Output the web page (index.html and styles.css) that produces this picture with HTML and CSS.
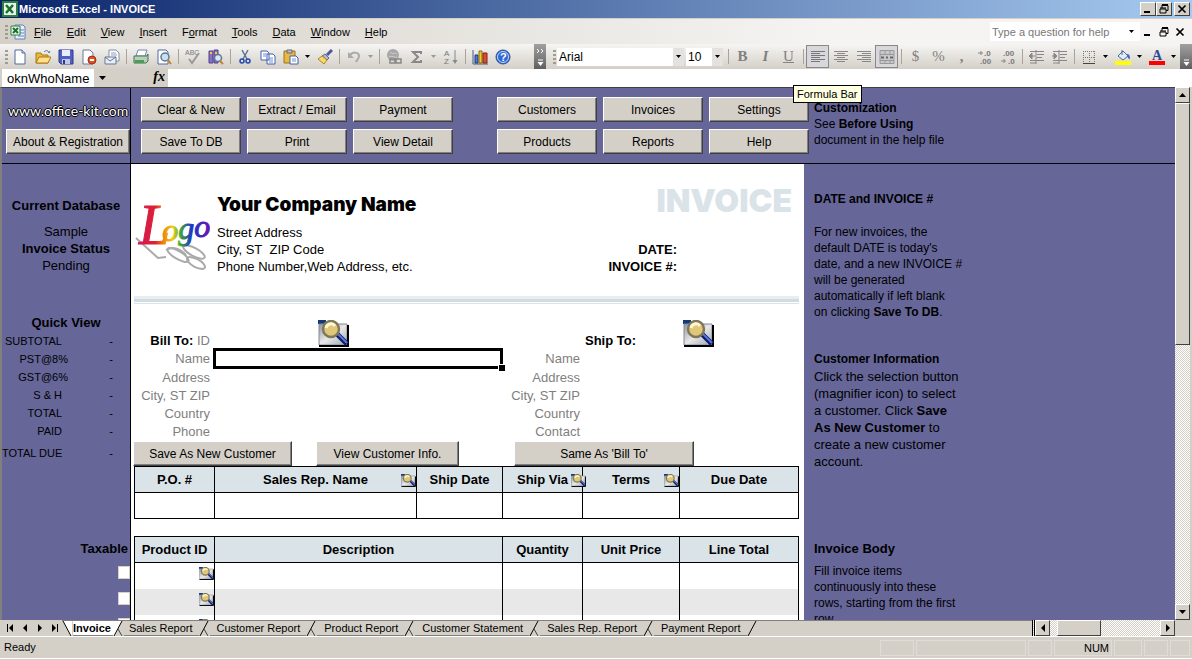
FILE: index.html
```html
<!DOCTYPE html>
<html lang="en">
  <head>
    <meta charset="utf-8" />
    <meta name="viewport" content="width=device-width, initial-scale=1.0" />
    <title>Microsoft Excel - INVOICE</title>
    <link rel="stylesheet" href="styles.css" />
  </head>

  <body>
    <!-- shared icons -->
    <svg class="defs" aria-hidden="true">
      <defs>
        <linearGradient id="lens-page" x1="0" y1="0" x2="1" y2="1">
          <stop offset="0" stop-color="#8f97a0" />
          <stop offset="0.5" stop-color="#e8e8e8" />
          <stop offset="1" stop-color="#9aa4b8" />
        </linearGradient>
        <linearGradient id="rainbow" gradientUnits="userSpaceOnUse" x1="4" y1="0" x2="74" y2="0">
          <stop offset="0" stop-color="#d01858" />
          <stop offset="0.25" stop-color="#e02030" />
          <stop offset="0.36" stop-color="#f08010" />
          <stop offset="0.5" stop-color="#f0d010" />
          <stop offset="0.6" stop-color="#48a830" />
          <stop offset="0.76" stop-color="#1838c8" />
          <stop offset="1" stop-color="#6018b0" />
        </linearGradient>
      </defs>
      <symbol id="lens" viewBox="0 0 31 27">
        <path d="M0 0h8v4H0z" fill="#123a78" />
        <path d="M1 4h28v21H1z" fill="url(#lens-page)" stroke="#889" />
        <path d="M1 26h29V5" fill="none" stroke="#000" stroke-width="2" />
        <path d="M19 14l10 10" stroke="#0c1c68" stroke-width="5" />
        <path d="M20 14l9 9" stroke="#5878d8" stroke-width="2" />
        <circle cx="13" cy="9" r="8" fill="#e0c878" stroke="#807858" stroke-width="2.5" />
        <path d="M8 8a5 5 0 0 1 9-2" fill="none" stroke="#fff8d8" stroke-width="3" />
      </symbol>
      <symbol id="down" viewBox="0 0 7 4"><path d="M0 0h7L3.5 4z" /></symbol>
      <symbol id="slash" viewBox="0 0 11 16">
        <path d="M1 15L9 0" fill="none" stroke="#000" />
        <path d="M5 8l4 7" fill="none" stroke="#444" />
      </symbol>
      <symbol id="min" viewBox="0 0 12 10"><path d="M2 7h6v2H2z" /></symbol>
      <symbol id="restore" viewBox="0 0 12 10">
        <path d="M4 1.5h6v5H8M4 0.5h6M4 1v3M2 4h6M2 5h6v4H2z" fill="none" stroke="#000" />
      </symbol>
      <symbol id="close" viewBox="0 0 12 10">
        <path d="M2.500 1.500l7 7M9.500 1.500l-7 7" stroke="#000" stroke-width="1.700" />
      </symbol>
    </svg>

    <header class="titlebar">
      <svg class="app-icon" viewBox="0 0 16 16">
        <path d="M1 1h14v14H1z" fill="#e8f4e8" stroke="#2c8040" stroke-width="2" />
        <path d="M4 4l7 8M11 4l-7 8" stroke="#187030" stroke-width="2.5" />
      </svg>
      <h1>Microsoft Excel - INVOICE</h1>
      <div class="window-buttons">
        <button aria-label="Minimize"><svg><use href="#min" /></svg></button>
        <button aria-label="Restore"><svg><use href="#restore" /></svg></button>
        <button aria-label="Close"><svg><use href="#close" /></svg></button>
      </div>
    </header>

    <nav class="menubar">
      <span class="grip"></span>
      <svg class="book-icon" viewBox="0 0 16 16">
        <path d="M5 1h8l2 2v12H5z" fill="#e8f0ff" stroke="#6080b8" />
        <path d="M10 6h4M10 9h4M8 12h6" stroke="#6080b8" />
        <path d="M1 2h9v9H1z" fill="#e8f4e8" stroke="#2c8040" />
        <path d="M3 4l5 5M8 4L3 9" stroke="#187030" stroke-width="2" />
      </svg>
      <a href="#"><u>F</u>ile</a>
      <a href="#"><u>E</u>dit</a>
      <a href="#"><u>V</u>iew</a>
      <a href="#"><u>I</u>nsert</a>
      <a href="#">F<u>o</u>rmat</a>
      <a href="#"><u>T</u>ools</a>
      <a href="#"><u>D</u>ata</a>
      <a href="#"><u>W</u>indow</a>
      <a href="#"><u>H</u>elp</a>
      <input class="ask" aria-label="Ask a question" placeholder="Type a question for help" />
      <button class="drop" aria-label="Previous questions"><svg><use href="#down" /></svg></button>
      <div class="mdi-buttons">
        <button aria-label="Minimize workbook"><svg><use href="#min" /></svg></button>
        <button aria-label="Restore workbook"><svg><use href="#restore" /></svg></button>
        <button aria-label="Close workbook"><svg><use href="#close" /></svg></button>
      </div>
    </nav>

    <div class="toolbars">
      <div class="toolbar standard">
        <span class="grip"></span>
        <button aria-label="New">
          <svg viewBox="0 0 16 16"><path d="M3 1h7l3 3v11H3z" fill="#fff" stroke="#5068a0" /><path d="M10 1v3h3" fill="#c8d8f0" stroke="#5068a0" /></svg>
        </button>
        <button aria-label="Open">
          <svg viewBox="0 0 16 16"><path d="M1 4h5l1 2h6v8H1z" fill="#e8b840" stroke="#a87818" /><path d="M1 14l3-6h12l-3 6z" fill="#ffe088" stroke="#a87818" /><path d="M9 3c2-2 4-2 5 1l1-2" fill="none" stroke="#587098" /></svg>
        </button>
        <button aria-label="Save">
          <svg viewBox="0 0 16 16"><path d="M1 1h14v14H3l-2-2z" fill="#5060c0" stroke="#303890" /><path d="M4 1h8v6H4z" fill="#e8ecff" /><path d="M4 10h8v5H4z" fill="#c0c8e8" /><path d="M5 11h2v4H5z" fill="#303890" /></svg>
        </button>
        <button aria-label="Permission">
          <svg viewBox="0 0 16 16"><path d="M2 1h7l3 3v11H2z" fill="#fff" stroke="#6878a0" /><circle cx="11" cy="11" r="4" fill="#e05028" stroke="#a03010" /><path d="M9 11h4" stroke="#fff" stroke-width="2" /></svg>
        </button>
        <button aria-label="E-mail">
          <svg viewBox="0 0 16 16"><path d="M5 1h7l3 3v8H5z" fill="#fff" stroke="#8090a8" /><path d="M7 4h5M7 6h6" stroke="#90a0c0" /><path d="M1 8h11v7H1z" fill="#e8eef8" stroke="#687890" /><path d="M1 8l5 4 6-4" fill="none" stroke="#687890" /></svg>
        </button>
        <span class="sep"></span>
        <button aria-label="Print">
          <svg viewBox="0 0 16 16"><path d="M5 1h9l-2 6H3z" fill="#fff" stroke="#7088b0" /><path d="M1 7h13l1-2v7l-2 2H1z" fill="#b8d0b8" stroke="#487058" /><path d="M2 11h9v3H2z" fill="#48a058" /></svg>
        </button>
        <button aria-label="Print Preview">
          <svg viewBox="0 0 16 16"><path d="M2 1h8l2 2v12H2z" fill="#fff" stroke="#5068a0" /><circle cx="9" cy="8" r="4" fill="#c8e0f0" stroke="#607890" stroke-width="1.5" /><path d="M12 11l3 4" stroke="#c88030" stroke-width="2" /></svg>
        </button>
        <span class="sep"></span>
        <button aria-label="Spelling">
          <svg viewBox="0 0 16 16"><text x="0" y="6" class="tiny">ABC</text><path d="M4 10l3 4 7-10" fill="none" stroke="#999" stroke-width="2" /></svg>
        </button>
        <button aria-label="Research">
          <svg viewBox="0 0 16 16"><path d="M1 2h4v12H1zM6 1h4v13H6z" fill="#8870c8" stroke="#504090" /><path d="M2 4h2M7 4h2" stroke="#f0d040" stroke-width="2" /><circle cx="10" cy="9" r="3.500" fill="#d8e8f8" stroke="#607890" stroke-width="1.500" /><path d="M12 12l3 3" stroke="#c88030" stroke-width="2" /></svg>
        </button>
        <span class="sep"></span>
        <button aria-label="Cut">
          <svg viewBox="0 0 16 16"><path d="M5 1l5 9M11 1L6 10" stroke="#607098" stroke-width="1.500" /><circle cx="5" cy="12" r="2" fill="none" stroke="#2048b0" stroke-width="1.500" /><circle cx="11" cy="12" r="2" fill="none" stroke="#2048b0" stroke-width="1.500" /></svg>
        </button>
        <button aria-label="Copy">
          <svg viewBox="0 0 16 16"><path d="M1 2h6l2 2v7H1zM7 5h6l2 2v8H7z" fill="#fff" stroke="#4060b0" /><path d="M3 5h4M3 7h3M9 9h4M9 11h4M9 13h4" stroke="#7090d0" /></svg>
        </button>
        <button aria-label="Paste">
          <svg viewBox="0 0 16 16"><path d="M1 2h11v12H1z" fill="#e8b840" stroke="#a07020" /><path d="M4 1h5v3H4z" fill="#c0c0c8" stroke="#606878" /><path d="M7 7h6l2 2v6H7z" fill="#fff" stroke="#4060b0" /><path d="M9 10h4M9 12h4" stroke="#7090d0" /></svg>
        </button>
        <button class="drop" aria-label="Paste options"><svg><use href="#down" /></svg></button>
        <button aria-label="Format Painter">
          <svg viewBox="0 0 16 16"><path d="M15 1l-5 5" stroke="#505898" stroke-width="3" /><path d="M8 5l4 4-2 2-5-4z" fill="#b0b8d8" stroke="#606890" /><path d="M5 7l5 4-3 4-6-5z" fill="#f8d868" stroke="#b08820" /></svg>
        </button>
        <span class="sep"></span>
        <button aria-label="Undo">
          <svg viewBox="0 0 16 16"><path d="M3 7c4-5 10-4 10 0 0 3-2 4-3 6" fill="none" stroke="#aaa" stroke-width="2" /><path d="M2 3v6h6z" fill="#aaa" /></svg>
        </button>
        <button class="drop off" aria-label="Undo list"><svg><use href="#down" /></svg></button>
        <span class="sep"></span>
        <button aria-label="Insert Hyperlink">
          <svg viewBox="0 0 16 16"><circle cx="7" cy="6" r="6" fill="#a8a8a8" /><path d="M4 3c3 3 5 0 7 2M3 8c3-2 5 1 8 0" fill="none" stroke="#ccc" /><path d="M4 10h6v4H4zM9 10h6v4H9z" fill="none" stroke="#888" stroke-width="1.500" /></svg>
        </button>
        <button aria-label="AutoSum">
          <svg viewBox="0 0 16 16"><path d="M12 5V3H4l5 5-5 5h8v-2" fill="none" stroke="#888" stroke-width="2" /></svg>
        </button>
        <button class="drop off" aria-label="AutoSum list"><svg><use href="#down" /></svg></button>
        <button aria-label="Sort Ascending">
          <svg viewBox="0 0 16 16"><text x="1" y="7" class="small">A</text><text x="1" y="15" class="small">Z</text><path d="M12 1v12" stroke="#888" /><path d="M9.500 11h5L12 15z" fill="#888" /></svg>
        </button>
        <span class="sep"></span>
        <button aria-label="Chart Wizard">
          <svg viewBox="0 0 16 16"><path d="M1 1v14h15" fill="none" stroke="#406080" /><path d="M3 6h3v8H3z" fill="#4878d8" stroke="#203880" /><path d="M7 2h3v12H7z" fill="#f0c830" stroke="#906810" /><path d="M11 4h4v10h-4z" fill="#d85030" stroke="#802010" /></svg>
        </button>
        <button aria-label="Excel Help">
          <svg viewBox="0 0 16 16"><circle cx="8" cy="8" r="7" fill="#3068d0" stroke="#3050a0" /><circle cx="8" cy="8" r="5.500" fill="none" stroke="#c0d8ff" /><text x="5" y="12" class="q">?</text></svg>
        </button>
        <button class="overflow" aria-label="Standard toolbar options">
          <svg viewBox="0 0 12 25"><path d="M3 5l2 2-2 2M7 5l2 2-2 2M4 16h5" fill="none" stroke="#fff" /><path d="M3.500 18h6l-3 4z" fill="#fff" /></svg>
        </button>
      </div>

      <div class="toolbar formatting">
        <span class="grip"></span>
        <div class="combo combo-font">
          <input value="Arial" aria-label="Font" />
          <button class="drop" aria-label="Font list"><svg><use href="#down" /></svg></button>
        </div>
        <div class="combo combo-size">
          <input value="10" aria-label="Font size" />
          <button class="drop" aria-label="Size list"><svg><use href="#down" /></svg></button>
        </div>
        <span class="sep"></span>
        <button class="glyph"><b>B</b></button>
        <button class="glyph"><i>I</i></button>
        <button class="glyph"><u>U</u></button>
        <span class="sep"></span>
        <button class="pressed" aria-label="Align Left">
          <svg viewBox="0 0 16 16"><path d="M1 2.500h14M1 4.500h9M1 6.500h14M1 8.500h9M1 10.500h14M1 12.500h9" stroke="#777" /></svg>
        </button>
        <button aria-label="Center">
          <svg viewBox="0 0 16 16"><path d="M1 2.500h14M4 4.500h8M1 6.500h14M4 8.500h8M1 10.500h14M4 12.500h8" stroke="#888" /></svg>
        </button>
        <button aria-label="Align Right">
          <svg viewBox="0 0 16 16"><path d="M1 2.500h14M6 4.500h9M1 6.500h14M6 8.500h9M1 10.500h14M6 12.500h9" stroke="#888" /></svg>
        </button>
        <button class="pressed" aria-label="Merge and Center">
          <svg viewBox="0 0 16 16"><path d="M1 1.500h14v13H1zM1 5.500h14M1 11.500h14M6 1v4M11 1v4M6 12v3M11 12v3" fill="#c8c8c8" stroke="#999" /><path d="M2 8.500h3M11 8.500h3M7 8.500h2" stroke="#666" stroke-width="2" /></svg>
        </button>
        <span class="sep"></span>
        <button class="glyph">$</button>
        <button class="glyph">%</button>
        <button class="glyph"><b>,</b></button>
        <button aria-label="Increase Decimal">
          <svg viewBox="0 0 16 16"><path d="M1 4h5M4 2v4" stroke="#888" /><text x="7" y="7" class="dec">.0</text><text x="3" y="15" class="dec">.00</text></svg>
        </button>
        <button aria-label="Decrease Decimal">
          <svg viewBox="0 0 16 16"><text x="3" y="7" class="dec">.00</text><path d="M1 12h5M4 10v4" stroke="#888" /><text x="8" y="15" class="dec">.0</text></svg>
        </button>
        <span class="sep"></span>
        <button aria-label="Decrease Indent">
          <svg viewBox="0 0 16 16"><path d="M1 2.500h14M8 5.500h7M8 8.500h5M1 11.500h14M1 14h6M7 1v14" stroke="#888" /><path d="M0 7l3-3v6zM3 7h3" fill="#888" stroke="#888" /></svg>
        </button>
        <button aria-label="Increase Indent">
          <svg viewBox="0 0 16 16"><path d="M1 2.500h14M8 5.500h7M8 8.500h5M1 11.500h14M1 14h6M7 1v14" stroke="#888" /><path d="M5 7L2 4v6zM0 7h3" fill="#888" stroke="#888" /></svg>
        </button>
        <span class="sep"></span>
        <button aria-label="Borders">
          <svg viewBox="0 0 16 16"><path d="M2 2.500h12M2 8.500h12M2.500 2v11M8.500 2v11M13.500 2v11" stroke="#777" stroke-dasharray="1 1" /><path d="M2 14.500h12" stroke="#444" /></svg>
        </button>
        <button class="drop" aria-label="Border list"><svg><use href="#down" /></svg></button>
        <button aria-label="Fill Color">
          <svg viewBox="0 0 16 16"><path d="M7 1v5M3 7l5-5 5 5-5 4z" fill="#e0ecf8" stroke="#506890" /><path d="M12 5c3 0 3 3 3 5-2 0-2-2-3-3z" fill="#3868c8" /><path d="M0 12h16v4H0z" fill="#ff0" /></svg>
        </button>
        <button class="drop" aria-label="Fill list"><svg><use href="#down" /></svg></button>
        <button aria-label="Font Color">
          <svg viewBox="0 0 16 16"><text x="3" y="11" class="fontcolor">A</text><path d="M0 12h16v4H0z" fill="#f00" /></svg>
        </button>
        <button class="drop" aria-label="Font color list"><svg><use href="#down" /></svg></button>
        <button class="overflow" aria-label="Formatting toolbar options">
          <svg viewBox="0 0 12 25"><path d="M4 16h5" stroke="#fff" /><path d="M3.500 18h6l-3 4z" fill="#fff" /></svg>
        </button>
      </div>
    </div>

    <div class="formulabar">
      <input class="namebox" value="oknWhoName" aria-label="Name box" />
      <button class="drop" aria-label="Names"><svg><use href="#down" /></svg></button>
      <span class="fx">fx</span>
      <input class="formula" aria-label="Formula" />
      <span class="tooltip" role="tooltip">Formula Bar</span>
    </div>

    <main class="workspace">
      <div class="sheet">
        <div class="actions">
          <div class="about">
            <a href="#">www.office-kit.com</a>
            <button>About &amp; Registration</button>
          </div>
          <div class="button-grid">
            <button>Clear &amp; New</button>
            <button>Extract / Email</button>
            <button>Payment</button>
            <button>Save To DB</button>
            <button>Print</button>
            <button>View Detail</button>
          </div>
          <div class="button-grid">
            <button>Customers</button>
            <button>Invoices</button>
            <button>Settings</button>
            <button>Products</button>
            <button>Reports</button>
            <button>Help</button>
          </div>
          <p class="customization">
            <b>Customization</b><br />See <b>Before Using</b><br />document in the help file
          </p>
        </div>

        <div class="body">
          <aside class="sidebar">
            <h2>Current Database</h2>
            <p>Sample</p>
            <p><b>Invoice Status</b></p>
            <p>Pending</p>
            <h2 class="quick">Quick View</h2>
            <table class="totals">
              <tr><th>SUBTOTAL</th><td>-</td></tr>
              <tr><th class="tax">PST@8%</th><td>-</td></tr>
              <tr><th class="tax">GST@6%</th><td>-</td></tr>
              <tr><th>S &amp; H</th><td>-</td></tr>
              <tr><th>TOTAL</th><td>-</td></tr>
              <tr><th>PAID</th><td>-</td></tr>
              <tr class="due"><th>TOTAL DUE</th><td>-</td></tr>
            </table>
            <h2 class="taxable">Taxable</h2>
            <div class="checks">
              <input type="checkbox" aria-label="Row 1 taxable" />
              <input type="checkbox" aria-label="Row 2 taxable" />
              <input type="checkbox" aria-label="Row 3 taxable" />
            </div>
          </aside>

          <section class="invoice">
            <div class="company">
              <svg class="logo" viewBox="0 0 76 88" aria-label="Logo">
                <g fill="none" stroke="#aaa" stroke-width="2">
                  <path d="M2 54l22 20 8-1" />
                  <path d="M32 66c6-4 14-2 20 5" />
                  <ellipse cx="44" cy="71" rx="12" ry="4" transform="rotate(30 44 71)" />
                  <ellipse cx="62" cy="79" rx="10" ry="4" transform="rotate(28 62 79)" />
                  <ellipse cx="60" cy="68" rx="12" ry="4" transform="rotate(28 60 68)" />
                </g>
                <text x="5" y="60"><tspan class="logo-l">L</tspan><tspan dx="-8" dy="-3">o</tspan><tspan dy="-2">g</tspan><tspan dy="-2">o</tspan></text>
              </svg>
              <div class="address">
                <h2>Your Company Name</h2>
                <p>Street Address</p>
                <p>City, ST&nbsp; ZIP Code</p>
                <p>Phone Number,Web Address, etc.</p>
              </div>
              <div class="heading">
                <h2>INVOICE</h2>
                <p>DATE:</p>
                <p>INVOICE #:</p>
              </div>
            </div>

            <hr />

            <div class="parties">
              <p class="label first"><b>Bill To:</b> ID</p>
              <button class="lens bill-lens" aria-label="Select customer"><svg><use href="#lens" /></svg></button>
              <p class="ship first"><b>Ship To:</b></p>
              <button class="lens" aria-label="Select ship-to"><svg><use href="#lens" /></svg></button>

              <label class="label" for="bill-name">Name</label>
              <div class="active-cell"><input id="bill-name" /></div>
              <p class="label">Name</p>
              <p class="label">Address</p>
              <p class="label ship-label">Address</p>
              <p class="label">City, ST ZIP</p>
              <p class="label ship-label">City, ST ZIP</p>
              <p class="label">Country</p>
              <p class="label ship-label">Country</p>
              <p class="label">Phone</p>
              <p class="label ship-label">Contact</p>
            </div>

            <div class="party-buttons">
              <button class="save-new">Save As New Customer</button>
              <button class="view-info">View Customer Info.</button>
              <button class="same-as">Same As 'Bill To'</button>
            </div>

            <table class="grid">
              <colgroup>
                <col class="c-id" /><col class="c-rep" /><col class="c-date" /><col class="c-qty" /><col class="c-price" /><col />
              </colgroup>
              <tr>
                <th>P.O. #</th>
                <th>Sales Rep. Name<button class="mini" aria-label="Select rep"><svg><use href="#lens" /></svg></button></th>
                <th>Ship Date</th>
                <th>Ship Via<button class="mini over" aria-label="Select carrier"><svg><use href="#lens" /></svg></button></th>
                <th>Terms<button class="mini" aria-label="Select terms"><svg><use href="#lens" /></svg></button></th>
                <th>Due Date</th>
              </tr>
              <tr><td></td><td></td><td></td><td></td><td></td><td></td></tr>
            </table>

            <table class="grid items">
              <colgroup>
                <col class="c-id" /><col class="c-desc" /><col class="c-qty" /><col class="c-price" /><col />
              </colgroup>
              <tr><th>Product ID</th><th>Description</th><th>Quantity</th><th>Unit Price</th><th>Line Total</th></tr>
              <tr>
                <td><button class="mini" aria-label="Select product"><svg><use href="#lens" /></svg></button></td>
                <td></td><td></td><td></td><td></td>
              </tr>
              <tr class="odd">
                <td><button class="mini" aria-label="Select product"><svg><use href="#lens" /></svg></button></td>
                <td></td><td></td><td></td><td></td>
              </tr>
              <tr>
                <td><button class="mini" aria-label="Select product"><svg><use href="#lens" /></svg></button></td>
                <td></td><td></td><td></td><td></td>
              </tr>
            </table>
          </section>

          <aside class="notes">
            <h3>DATE and INVOICE #</h3>
            <p class="date-note">
              For new invoices, the<br />default DATE is today's<br />date, and a new INVOICE #<br />will be
              generated<br />automatically if left blank<br />on clicking <b>Save To DB</b>.
            </p>
            <h3>Customer Information</h3>
            <p class="customer-note">
              Click the selection button<br />(magnifier icon) to select<br />a customer. Click <b>Save</b><br /><b>As
              New Customer</b> to<br />create a new customer<br />account.
            </p>
            <h3 class="large">Invoice Body</h3>
            <p class="body-note">
              Fill invoice items<br />continuously into these<br />rows, starting from the first<br />row.
            </p>
          </aside>
        </div>
      </div>

      <div class="vscroll">
        <button aria-label="Scroll up"><svg viewBox="0 0 7 4"><path d="M0 4h7L3.500 0z" /></svg></button>
        <div class="thumb"></div>
        <div class="track"></div>
        <button aria-label="Scroll down"><svg><use href="#down" /></svg></button>
      </div>
    </main>

    <div class="tabbar">
      <div class="tab-nav">
        <button aria-label="First sheet"><svg viewBox="0 0 8 8"><path d="M1 0h1v8H1zM7 0v8L3 4z" /></svg></button>
        <button aria-label="Previous sheet"><svg viewBox="0 0 8 8"><path d="M6 0v8L2 4z" /></svg></button>
        <button aria-label="Next sheet"><svg viewBox="0 0 8 8"><path d="M2 0v8l4-4z" /></svg></button>
        <button aria-label="Last sheet"><svg viewBox="0 0 8 8"><path d="M1 0v8l4-4zM6 0h1v8H6z" /></svg></button>
      </div>
      <nav class="tabs">
        <svg class="slash" viewBox="0 0 9 16"><path d="M0 0h9v16H8z" fill="#fff" /><path d="M0 0l8 15" stroke="#000" /></svg>
        <a class="current" href="#">Invoice</a>
        <svg class="slash" viewBox="0 0 11 16"><path d="M0 0h9L1 16H0z" fill="#fff" /><use href="#slash" /></svg>
        <a class="second" href="#">Sales Report</a>
        <svg class="slash"><use href="#slash" /></svg>
        <a href="#">Customer Report</a>
        <svg class="slash"><use href="#slash" /></svg>
        <a href="#">Product Report</a>
        <svg class="slash"><use href="#slash" /></svg>
        <a href="#">Customer Statement</a>
        <svg class="slash"><use href="#slash" /></svg>
        <a href="#">Sales Rep. Report</a>
        <svg class="slash"><use href="#slash" /></svg>
        <a href="#">Payment Report</a>
        <svg class="slash" viewBox="0 0 11 16"><path d="M1 15L9 0" stroke="#000" /></svg>
      </nav>
      <div class="hscroll">
        <button aria-label="Scroll left"><svg viewBox="0 0 8 8"><path d="M6 0v8L2 4z" /></svg></button>
        <div class="thumb"></div>
        <button aria-label="Scroll right"><svg viewBox="0 0 8 8"><path d="M2 0v8l4-4z" /></svg></button>
      </div>
    </div>

    <footer class="statusbar">
      <span class="ready">Ready</span>
      <span class="panel w34"></span>
      <span class="panel w110"></span>
      <span class="panel w24"></span>
      <span class="panel num">NUM</span>
      <span class="panel w28"></span>
      <span class="panel w24"></span>
      <span class="panel w20"></span>
    </footer>
  </body>
</html>
```
FILE: styles.css
```css
* {
  box-sizing: border-box;
}

body {
  margin: 0;
  height: 100vh;
  display: flex;
  flex-direction: column;
  overflow: hidden;
  background: #d4d0c8;
  color: #000;
  font-family: "Liberation Sans", Arial, sans-serif;
  font-size: 12px;
}

h1,
h2,
h3,
p {
  margin: 0;
  font-size: inherit;
}

a {
  color: inherit;
  text-decoration: none;
}

button,
input {
  font: inherit;
  color: inherit;
  margin: 0;
  padding: 0;
  border: 0;
  border-radius: 0;
  outline: 0;
}

button {
  display: flex;
  align-items: center;
  justify-content: center;
  background: none;
}

svg {
  display: block;
}

.defs {
  position: absolute;
  width: 0;
  height: 0;
}

/* title bar */
.titlebar {
  display: flex;
  align-items: center;
  height: 19px;
  padding: 0 2px;
  background: linear-gradient(to right, #0a246a, #a6caf0);
  border-bottom: 1px solid #d4d0c8;
  color: #fff;
}

.app-icon,
.book-icon {
  width: 16px;
  height: 16px;
}

.titlebar h1 {
  flex: 1;
  padding-left: 1px;
  font-size: 11px;
}

.window-buttons {
  display: flex;
}

.window-buttons button {
  width: 16px;
  height: 14px;
  background: #d4d0c8;
  border: 1px solid;
  border-color: #fff #404040 #404040 #fff;
}

.window-buttons button:last-child {
  margin-left: 2px;
}

.window-buttons svg,
.mdi-buttons svg {
  width: 12px;
  height: 10px;
}

/* menus */
.menubar {
  display: flex;
  align-items: center;
  height: 25px;
  padding: 0 4px 0 5px;
  background: linear-gradient(to right, #d4d0c8, #f5f4f2 70%);
  font-size: 11px;
}

.menubar a {
  margin-right: 15px;
}

.book-icon {
  margin: 0 8px 0 2px;
}

.grip {
  width: 3px;
  height: 14px;
  background: repeating-linear-gradient(#a09c94 0 2px, transparent 2px 4px);
}

.ask {
  width: 133px;
  height: 19px;
  margin-left: auto;
  padding-left: 2px;
  background: #fff;
}

.ask::placeholder {
  color: #777;
  opacity: 1;
}

.drop {
  width: 11px;
}

.drop svg {
  width: 5px;
  height: 3px;
}

.drop.off svg {
  fill: #999;
}

.menubar .drop {
  width: 17px;
  height: 19px;
  background: #fff;
}

.mdi-buttons {
  display: flex;
}

.mdi-buttons button {
  width: 16px;
}

/* toolbars */
.toolbars {
  display: flex;
  height: 25px;
  background: linear-gradient(#f6f5f3, #d4d0c8);
}

.toolbar {
  display: flex;
  align-items: stretch;
  padding-left: 5px;
}

.toolbar .grip {
  align-self: center;
}

.standard {
  width: 546px;
}

.formatting {
  flex: 1;
}

.toolbar button {
  width: 23px;
}

.toolbar button svg {
  width: 16px;
  height: 16px;
}

.toolbar .drop {
  width: 11px;
}

.toolbar .drop svg {
  width: 5px;
  height: 3px;
}

.sep {
  width: 1px;
  margin: 5px 2px 5px 3px;
  background: #a8a49c;
}

.toolbar .overflow {
  width: 12px;
  margin-left: auto;
  background: linear-gradient(#a0a0a0, #606060);
}

.toolbar .overflow svg {
  width: 12px;
  height: 25px;
}

.formatting .grip {
  margin: 0 1px 0 2px;
}

.combo {
  display: flex;
  align-self: center;
  height: 18px;
  margin-right: 2px;
  background: #fff;
}

.combo input {
  width: 100%;
  min-width: 0;
  padding-left: 2px;
  background: none;
}

.combo .drop {
  flex: none;
  background: #e4e2de;
}

.combo-font {
  width: 127px;
}

.combo-size {
  width: 37px;
}

.toolbar .pressed {
  height: 23px;
  align-self: center;
  border: 1px solid #888;
  background: #d8d8dc;
}

.glyph {
  color: #808080;
  font-family: "Liberation Serif", serif;
  font-size: 15px;
}

.glyph i {
  font-weight: bold;
}

.tiny {
  font-size: 7px;
  fill: #777;
}

.small {
  font-size: 8px;
  fill: #777;
}

.dec {
  font-size: 8px;
  font-weight: bold;
  fill: #777;
}

.q {
  font-size: 11px;
  font-weight: bold;
  fill: #fff;
}

.fontcolor {
  font-family: "Liberation Serif", serif;
  font-size: 14px;
  font-weight: bold;
  fill: #304890;
}

/* formula bar */
.formulabar {
  position: relative;
  display: flex;
  height: 18px;
  padding-left: 2px;
}

.namebox {
  width: 92px;
  padding-left: 5px;
  background: #fff;
  font-size: 13px;
}

.formulabar .drop {
  width: 16px;
}

.formulabar .drop svg {
  width: 7px;
  height: 4px;
}

.fx {
  width: 58px;
  padding-right: 3px;
  text-align: right;
  font: italic bold 14px/16px "Liberation Serif", serif;
}

.formula {
  flex: 1;
  background: #fff;
}

.tooltip {
  position: absolute;
  z-index: 2;
  left: 793px;
  top: 16px;
  padding: 0 3px;
  border: 1px solid #000;
  background: #ffffe1;
  line-height: 16px;
  font-size: 11px;
}

/* sheet */
.workspace {
  flex: 1;
  min-height: 0;
  display: flex;
  padding-right: 2px;
}

.sheet {
  flex: 1;
  min-width: 0;
  overflow: hidden;
  border-left: 2px solid #808080;
  border-top: 1px solid #404040;
  background: #666699;
}

.actions {
  display: flex;
  height: 76px;
  border-bottom: 1px solid #000;
}

.actions button,
.party-buttons button {
  height: 25px;
  background: #d4d0c8;
  border: 1px solid;
  border-color: #fff #404040 #404040 #fff;
  box-shadow: inset -1px -1px #808080;
  font-size: 12px;
  white-space: nowrap;
}

.about {
  width: 129px;
  padding: 9px 0 0 4px;
  border-right: 1px solid #000;
}

.about a {
  display: block;
  height: 32px;
  padding-left: 2px;
  color: #fff;
  font: 14px/27px Lato, sans-serif;
  text-shadow: 1px 0 #000, -1px 0 #000, 0 1px #000, 0 -1px #000;
  white-space: nowrap;
}

.about button {
  width: 124px;
}

.button-grid {
  display: grid;
  grid-template-columns: repeat(3, 100px);
  gap: 7px 6px;
  align-content: start;
  padding: 9px 0 0 10px;
}

.button-grid + .button-grid {
  padding-left: 44px;
}

.customization {
  padding: 12px 0 0 5px;
  line-height: 16px;
  white-space: nowrap;
}

.body {
  display: grid;
  grid-template-columns: 129px 673fr 371fr;
}

.sidebar {
  padding-top: 33px;
  border-right: 1px solid #000;
  text-align: center;
  font-size: 13px;
  line-height: 17px;
}

.sidebar h2 {
  line-height: 18px;
}

.sidebar h2:first-child {
  margin-bottom: 8px;
}

.sidebar .quick {
  margin-top: 40px;
}

.totals {
  width: 111px;
  border-collapse: collapse;
  table-layout: fixed;
  font-size: 11px;
  line-height: 18px;
}

.totals th {
  width: 60px;
  padding: 0;
  font-weight: normal;
  text-align: right;
  white-space: nowrap;
}

.totals .tax {
  display: block;
  width: 66px;
}

.totals td {
  padding: 0;
  text-align: right;
}

.totals .due > * {
  padding-top: 4px;
}

.sidebar .taxable {
  margin-top: 78px;
  padding-right: 2px;
  text-align: right;
}

.checks {
  display: flex;
  flex-direction: column;
  align-items: flex-end;
  gap: 13px;
  margin-top: 8px;
}

.checks input {
  appearance: none;
  width: 12px;
  height: 13px;
  background: #fff;
  border: 1px solid #d4d0c8;
}

/* invoice form */
.invoice {
  padding: 20px 5px 0 3px;
  background: #fff;
  font-size: 13px;
}

.company {
  display: flex;
  line-height: 17px;
}

.logo {
  width: 76px;
  height: 88px;
}

.logo text {
  font: italic 32px "Liberation Serif", serif;
  fill: url(#rainbow);
  stroke: url(#rainbow);
}

.logo .logo-l {
  font-size: 56px;
}

.address {
  flex: 1;
  padding: 9px 0 0 7px;
}

.address h2 {
  margin-bottom: 7px;
  font: 900 19px/24px Inter, sans-serif;
}

.heading {
  padding-right: 7px;
  text-align: right;
  font-weight: bold;
}

.heading h2 {
  margin-bottom: 23px;
  color: #d9e3e8;
  font: 900 32px/34px Inter, sans-serif;
}

.heading p {
  padding-right: 115px;
}

.invoice hr {
  height: 8px;
  margin: 21px 0 16px;
  border: 0;
  border-top: 3px solid #e8eef0;
  border-bottom: 1px solid #d9e3e8;
  background: linear-gradient(#d0dce2 3px, #fff 3px);
}

.parties {
  display: grid;
  grid-template-columns: 76px 290px 74px 97px 32px;
  grid-template-rows: 28px 20px repeat(4, 18px);
  column-gap: 3px;
  align-items: center;
}

.label {
  grid-column: 1;
  color: #808080;
  text-align: right;
  white-space: nowrap;
}

.label b {
  color: #000;
}

.first {
  align-self: end;
}

.active-cell + .label,
.ship-label {
  grid-column: 3;
}

.ship {
  grid-column: 4;
  padding-left: 2px;
}

.lens {
  width: 31px;
  height: 27px;
  align-self: start;
}

.bill-lens {
  margin-left: 105px;
}

.lens svg {
  width: 31px;
  height: 27px;
}

.active-cell {
  position: relative;
  height: 21px;
  border: 3px solid #000;
}

.active-cell input {
  display: block;
  width: 100%;
  height: 15px;
}

/* fill handle */
.active-cell::after {
  content: "";
  position: absolute;
  right: -5px;
  bottom: -5px;
  width: 6px;
  height: 6px;
  border: 1px solid #fff;
  border-width: 1px 0 0 1px;
  background: #000;
}

.party-buttons {
  display: flex;
  margin: 1px 0 0 -1px;
}

.save-new {
  width: 159px;
}

.view-info {
  width: 143px;
  margin-left: 24px;
}

.same-as {
  width: 180px;
  margin-left: 55px;
}

.grid {
  width: 100%;
  border-collapse: collapse;
  table-layout: fixed;
}

.grid th,
.grid td {
  position: relative;
  height: 26px;
  padding: 0;
  border: 1px solid #000;
}

.grid th {
  background: #d9e3e8;
}

.c-id,
.c-qty {
  width: 80px;
}

.c-rep {
  width: 202px;
}

.c-date {
  width: 86px;
}

.c-price {
  width: 97px;
}

.c-desc {
  width: 288px;
}

.items {
  margin-top: 17px;
}

.items td {
  border-top: 0;
  border-bottom: 0;
}

.odd td {
  background: #e8e8e8;
}

.mini {
  position: absolute;
  z-index: 1;
  right: 0;
  top: 7px;
}

.items .mini {
  top: 4px;
}

.mini.over {
  right: -4px;
}

.mini svg {
  width: 15px;
  height: 13px;
}

/* help notes */
.notes {
  padding: 27px 0 0 10px;
  line-height: 16px;
  white-space: nowrap;
}

.date-note {
  margin: 17px 0 31px;
}

.customer-note {
  font-size: 13px;
  line-height: 17px;
}

.notes h3 + .customer-note {
  margin: 1px 0 71px;
}

.notes .large {
  font-size: 13px;
}

.body-note {
  margin-top: 6px;
}

/* scroll bars */
.vscroll {
  display: flex;
  flex-direction: column;
  width: 15px;
}

.vscroll button,
.hscroll button,
.thumb {
  background: #d4d0c8;
  border: 1px solid;
  border-color: #fff #404040 #404040 #fff;
}

.vscroll button {
  height: 16px;
}

.vscroll svg {
  width: 7px;
  height: 4px;
}

.vscroll .thumb {
  flex: 240;
}

.track {
  flex: 260;
}

.track,
.hscroll {
  background: repeating-conic-gradient(#fff 0 25%, #d4d0c8 0 50%) 0 0 / 2px 2px;
}

/* sheet tabs */
.tabbar {
  display: flex;
  height: 16px;
  padding-left: 2px;
  font-size: 11px;
  line-height: 15px;
}

.tab-nav {
  display: flex;
}

.tab-nav button {
  width: 15px;
}

.tab-nav svg,
.hscroll svg {
  width: 8px;
  height: 8px;
}

.tabs {
  flex: 1;
  display: flex;
  border-top: 1px solid #808080;
}

.tabs a {
  padding: 0 6px 0 7px;
  border-bottom: 1px solid #808080;
  white-space: nowrap;
}

.tabs .current {
  padding: 0 2px 0 0;
  background: #fff;
  font-weight: bold;
}

.tabs .second {
  padding-left: 5px;
}

.slash {
  width: 11px;
  height: 16px;
}

.hscroll {
  display: flex;
  width: 143px;
  margin-right: 17px;
  border-left: 3px double #000;
}

.hscroll button {
  width: 15px;
}

.hscroll .thumb {
  width: 44px;
  margin: 0 auto 0 7px;
}

/* status bar */
.statusbar {
  display: flex;
  gap: 2px;
  height: 24px;
  padding: 3px 2px 4px 4px;
  border-top: 1px solid #fff;
  box-shadow: inset 0 -1px #d4d0c8, inset 0 -2px #fff;
  font-size: 11px;
  line-height: 15px;
}

.ready {
  flex: 1;
}

.panel {
  border: 1px solid #e0ddd6;
}

.w20 {
  width: 20px;
}

.w24 {
  width: 24px;
}

.w28 {
  width: 28px;
}

.w34 {
  width: 34px;
}

.w110 {
  width: 110px;
}

.num {
  width: 58px;
  padding-right: 2px;
  text-align: right;
}
```
